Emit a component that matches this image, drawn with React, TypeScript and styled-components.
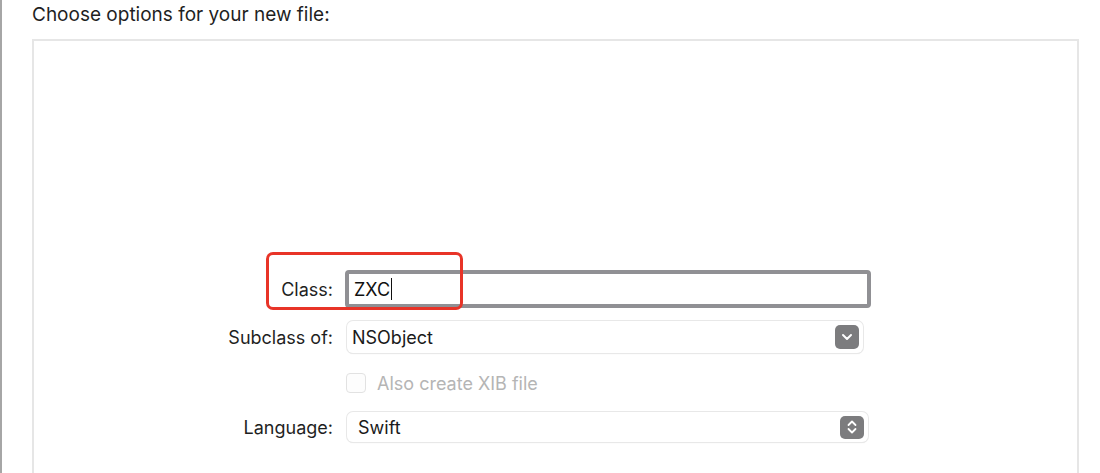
import React from "react";
import styled, { createGlobalStyle } from "styled-components";

const Global = createGlobalStyle`
  html, body { margin: 0; padding: 0; background: #ffffff; }
  body { font-family: Inter, "Liberation Sans", Arial, sans-serif; color: #1d1d1f; }
`;

const Page = styled.div`
  display: flex;
  width: 1100px;
  height: 473px;
  overflow: hidden;
`;

const SideRule = styled.div`
  width: 2px;
  flex: none;
  background: #a6a6a6;
`;

const Main = styled.div`
  flex: 1;
  display: flex;
  flex-direction: column;
  padding-left: 30px;
  padding-right: 21px;
`;

const Title = styled.div`
  height: 39px;
  padding-top: 4px;
  box-sizing: border-box;
  font-size: 19px;
  line-height: 22px;
  color: #1f1f1f;
`;

const Panel = styled.div`
  flex: 1;
  border: 2px solid #e6e6e6;
  border-bottom: none;
  padding-top: 229px;
  display: flex;
  flex-direction: column;
`;

const Row = styled.div<{ $h: number; $mt: number }>`
  display: flex;
  align-items: center;
  height: ${(p) => p.$h}px;
  margin-top: ${(p) => p.$mt}px;
  position: relative;
`;

const Label = styled.div`
  width: 299px;
  flex: none;
  text-align: right;
  font-size: 18px;
  color: #1f1f1f;
  padding-right: 12px;
`;

const Field = styled.div`
  width: 526px;
  height: 38px;
  box-sizing: border-box;
  border: 4px solid #909094;
  border-radius: 4px;
  display: flex;
  align-items: center;
  padding-left: 5px;
  font-size: 18px;
  color: #111;
`;

const Caret = styled.span`
  display: inline-block;
  width: 1px;
  height: 22px;
  background: #111;
  margin-left: 1px;
`;

const Popup = styled.div<{ $w: number; $h: number; $pl: number }>`
  margin-left: 2px;
  width: ${(p) => p.$w}px;
  height: ${(p) => p.$h}px;
  box-sizing: border-box;
  border-radius: 6px;
  background: #fff;
  box-shadow: 0 0 0 1px #e8e8e8, 0 1px 1px rgba(0, 0, 0, 0.12);
  display: flex;
  align-items: center;
  justify-content: space-between;
  padding: 0 4px 0 ${(p) => p.$pl}px;
  font-size: 18px;
  color: #1a1a1a;
`;

const ArrowButton = styled.div<{ $h: number }>`
  width: 24px;
  height: ${(p) => p.$h}px;
  border-radius: 5px;
  background: #7c7c7e;
  display: flex;
  align-items: center;
  justify-content: center;
`;

const CheckBox = styled.div`
  margin-left: 1px;
  width: 20px;
  height: 20px;
  box-sizing: border-box;
  border: 1px solid #e2e2e2;
  border-radius: 4px;
  background: #fdfdfd;
`;

const CheckLabel = styled.div`
  margin-left: 11px;
  font-size: 18px;
  color: #b5b5b5;
`;

const Highlight = styled.div`
  position: absolute;
  left: 232px;
  top: -18px;
  width: 197px;
  height: 58px;
  box-sizing: border-box;
  border: 3px solid #e83428;
  border-radius: 7px;
  pointer-events: none;
`;

const Chevron = () => (
  <svg width="12" height="8" viewBox="0 0 12 8">
    <path d="M2 2 L6 6 L10 2" fill="none" stroke="#fff" strokeWidth="2" strokeLinecap="round" strokeLinejoin="round" />
  </svg>
);

const Stepper = () => (
  <svg width="12" height="16" viewBox="0 0 12 16">
    <path d="M2.5 6 L6 2.5 L9.5 6" fill="none" stroke="#fff" strokeWidth="1.8" strokeLinecap="round" strokeLinejoin="round" />
    <path d="M2.5 10 L6 13.5 L9.5 10" fill="none" stroke="#fff" strokeWidth="1.8" strokeLinecap="round" strokeLinejoin="round" />
  </svg>
);

export default function App() {
  return (
    <>
      <Global />
      <Page>
        <SideRule />
        <Main>
          <Title>Choose options for your new file:</Title>
          <Panel>
            <Row $h={38} $mt={0}>
              <Label>Class:</Label>
              <Field>
                ZXC<Caret />
              </Field>
              <Highlight />
            </Row>
            <Row $h={32} $mt={13}>
              <Label>Subclass of:</Label>
              <Popup $w={516} $h={32} $pl={5}>
                <span>NSObject</span>
                <ArrowButton $h={24}>
                  <Chevron />
                </ArrowButton>
              </Popup>
            </Row>
            <Row $h={20} $mt={20}>
              <Label />
              <CheckBox />
              <CheckLabel>Also create XIB file</CheckLabel>
            </Row>
            <Row $h={30} $mt={19}>
              <Label>Language:</Label>
              <Popup $w={521} $h={30} $pl={11}>
                <span>Swift</span>
                <ArrowButton $h={23}>
                  <Stepper />
                </ArrowButton>
              </Popup>
            </Row>
          </Panel>
        </Main>
      </Page>
    </>
  );
}
